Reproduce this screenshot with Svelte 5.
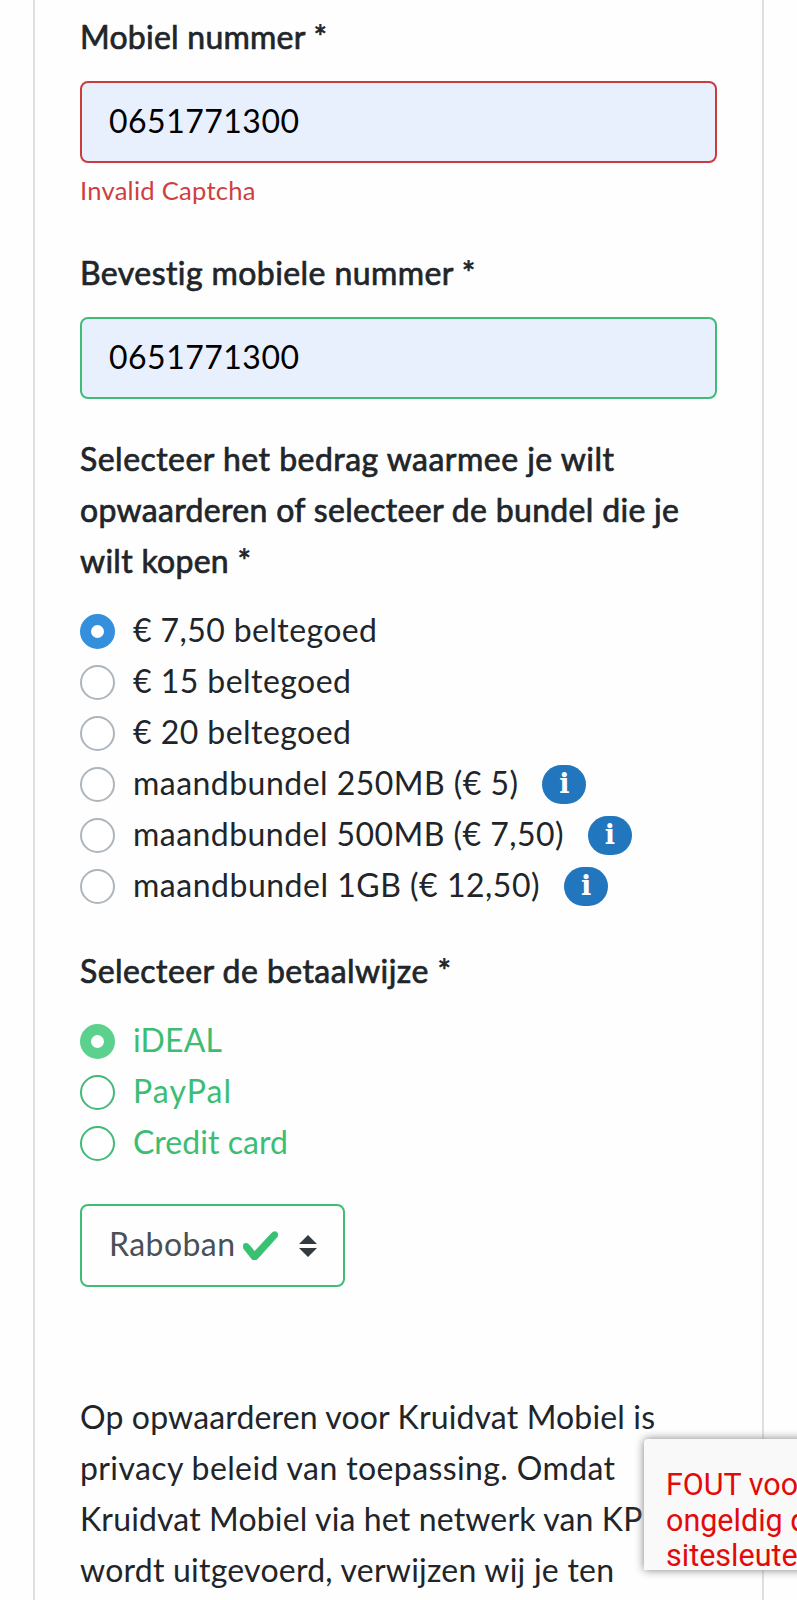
<script>
  const amounts = [
    { text: '€ 7,50 beltegoed', width: 244, checked: true },
    { text: '€ 15 beltegoed', width: 218 },
    { text: '€ 20 beltegoed', width: 218 },
    { text: 'maandbundel 250MB (€ 5)', width: 385, info: true },
    { text: 'maandbundel 500MB (€ 7,50)', width: 430.5, info: true },
    { text: 'maandbundel 1GB (€ 12,50)', width: 406.5, info: true }
  ];
  const methods = [
    { text: 'iDEAL', width: 89, checked: true },
    { text: 'PayPal', width: 98 },
    { text: 'Credit card', width: 155 }
  ];
  const question = [
    { text: 'Selecteer het bedrag waarmee je wilt', width: 534 },
    { text: 'opwaarderen of selecteer de bundel die je', width: 599 },
    { text: 'wilt kopen *', width: 171 }
  ];
  const privacy = [
    { text: 'Op opwaarderen voor Kruidvat Mobiel is', width: 575 },
    { text: 'privacy beleid van toepassing. Omdat', width: 535 },
    { text: 'Kruidvat Mobiel via het netwerk van KPN', width: 587 },
    { text: 'wordt uitgevoerd, verwijzen wij je ten', width: 534 }
  ];

  // Tracks the letters so that a line fills its measure exactly.
  function fit(node, width) {
    const natural = node.getBoundingClientRect().width;
    const gaps = node.textContent.length - 1;
    node.style.letterSpacing = `${(width - natural) / gaps}px`;
  }
</script>

<div class="page">
  <main class="card">
    <label class="title" for="mobile"><span use:fit={247}>Mobiel nummer *</span></label>
    <div class="field invalid" id="mobile"><span use:fit={190}>0651771300</span></div>
    <p class="error"><span use:fit={175.5}>Invalid Captcha</span></p>

    <label class="title confirm" for="confirm"><span use:fit={396}>Bevestig mobiele nummer *</span></label>
    <div class="field valid" id="confirm"><span use:fit={190}>0651771300</span></div>

    <h2 class="title amount">
      {#each question as line}
        <div><span use:fit={line.width}>{line.text}</span></div>
      {/each}
    </h2>
    <div class="options">
      {#each amounts as item}
        <div class="option">
          <i class="radio" class:checked={item.checked}></i>
          <span use:fit={item.width}>{item.text}</span>
          {#if item.info}<b class="info">i</b>{/if}
        </div>
      {/each}
    </div>

    <h2 class="title method"><span use:fit={371}>Selecteer de betaalwijze *</span></h2>
    <div class="options green">
      {#each methods as item}
        <div class="option">
          <i class="radio" class:checked={item.checked}></i>
          <span use:fit={item.width}>{item.text}</span>
        </div>
      {/each}
    </div>

    <div class="select">
      <span use:fit={126}>Raboban</span>
      <svg class="tick" width="35" height="30" viewBox="0.48 0.66 7.02 6.24" preserveAspectRatio="none">
        <path fill="#38c172" stroke="#38c172" stroke-width=".15" d="M2.3 6.73L.6 4.53c-.4-1.04.46-1.4 1.1-.8l1.1 1.4 3.4-3.8c.6-.63 1.6-.27 1.2.7l-4 4.6c-.43.5-.8.4-1.1.1z" />
      </svg>
      <svg class="arrows" width="18" height="22" viewBox="0 0 18 22">
        <path fill="#343a40" d="M0 9 9 0l9 9zM0 13h18l-9 9z" />
      </svg>
    </div>

    <div class="privacy">
      {#each privacy as line}
        <div><span use:fit={line.width}>{line.text}</span></div>
      {/each}
    </div>
  </main>

  <aside class="captcha">
    <div><span>FOUT voor site-</span></div>
    <div><span>ongeldig domein</span></div>
    <div><span>sitesleutel</span></div>
  </aside>
</div>

<style>
  :global(body) {
    background: #fefefe;
    overflow: hidden;
  }
  .page {
    position: relative;
    width: 797px;
    height: 1600px;
    overflow: hidden;
    font: 32px/51px Lato, 'Open Sans', sans-serif;
    color: #212529;
  }
  span {
    display: inline-block;
    white-space: nowrap;
  }
  .card {
    box-sizing: border-box;
    width: 731px;
    height: 1600px;
    margin-left: 33px;
    padding: 11px 45px 0;
    border: solid #dfdfdf;
    border-width: 0 2px;
  }
  .title {
    display: block;
    margin: 0;
    font-size: 32px;
    font-weight: 400;
    -webkit-text-stroke: 0.7px #212529;
  }
  .confirm {
    margin-top: 36px;
  }
  .method {
    margin-top: 35px;
  }
  .field {
    box-sizing: border-box;
    width: 637px;
    height: 82px;
    margin-top: 19px;
    padding: 12px 27px;
    border: 2px solid;
    border-radius: 8px;
    background: #e8f0fe;
    color: #000;
  }
  .invalid {
    border-color: #cb3b3c;
  }
  .valid {
    border-color: #3fbc75;
  }
  .error {
    height: 41px;
    margin: 7px 0 0;
    font-size: 25.6px;
    line-height: 41px;
    color: #d03f3f;
  }
  .amount {
    margin-top: 34px;
  }
  .options {
    margin-top: 18px;
  }
  .option {
    display: flex;
    height: 51px;
  }
  .radio {
    box-sizing: border-box;
    width: 35px;
    height: 35px;
    margin: 9.5px 18px 0 0;
    border: 2px solid #adb5bd;
    border-radius: 50%;
    background: #fff;
  }
  .radio.checked {
    border: 11px solid #3490dc;
  }
  .info {
    width: 44px;
    height: 39px;
    margin: 8px 0 0 24px;
    border-radius: 20px;
    background: #2176bd;
    color: #fff;
    font: bold 27px/38px 'DejaVu Serif', serif;
    text-align: center;
  }
  .green {
    color: #3cbd73;
  }
  .green .radio {
    border-color: #42b978;
  }
  .green .radio.checked {
    border-color: #5cd08d;
  }
  .select {
    box-sizing: border-box;
    display: flex;
    width: 265px;
    height: 83px;
    margin-top: 37px;
    padding: 12px 26px 0 27px;
    border: 2px solid #3fbc75;
    border-radius: 8px;
    color: #495057;
  }
  .tick {
    margin: 12px 0 0 8px;
  }
  .arrows {
    margin: 17px 0 0 auto;
  }
  .privacy {
    margin-top: 104px;
  }
  .captcha {
    position: absolute;
    left: 644px;
    top: 1439px;
    box-sizing: border-box;
    width: 220px;
    height: 131px;
    padding: 28px 0 0 22px;
    overflow: hidden;
    border-radius: 4px 0 0 0;
    background: #f9f9f9;
    box-shadow: 0 0 10px #808080;
    color: #e30a0a;
    font: 30.5px/35.5px Roboto, sans-serif;
  }
</style>
